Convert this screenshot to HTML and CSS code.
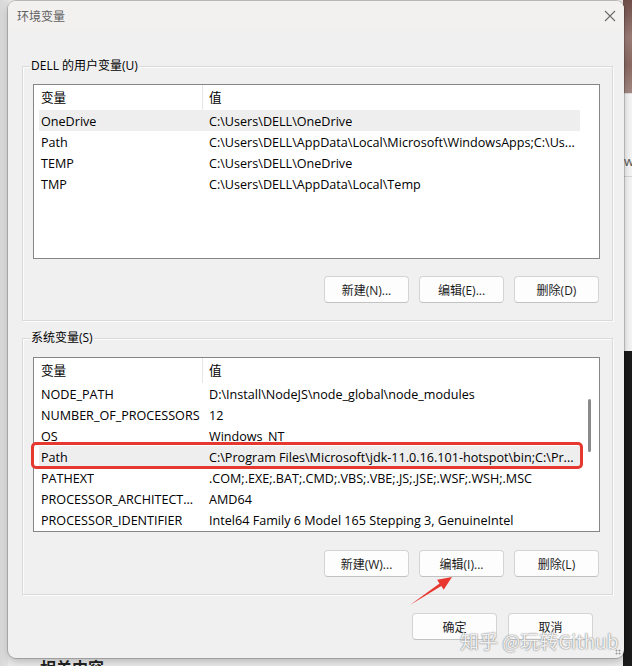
FILE: index.html
```html
<!DOCTYPE html>
<html lang="zh-CN">
<head>
<meta charset="utf-8">
<title>环境变量</title>
<link rel="stylesheet" href="styles.css">
</head>
<body>
<div class="desktop">
  <div class="strip">
    <div class="strip-photo"></div>
    <div class="strip-page"><span class="strip-w">w</span></div>
    <div class="strip-dark"></div>
  </div>
  <div class="page-text">相关内容</div>

  <div class="window">
    <div class="titlebar">
      <span class="title">环境变量</span>
      <svg class="close" width="12" height="12" viewBox="0 0 12 12"><path d="M1 1 L11 11 M11 1 L1 11" stroke="#6b6b6b" stroke-width="1.1" fill="none"/></svg>
    </div>

    <div class="body">
      <section class="group group-user">
        <div class="group-label">DELL 的用户变量(U)</div>
        <div class="list">
          <div class="list-main">
            <div class="row head"><div class="c1">变量</div><div class="c2">值</div></div>
            <div class="row sel"><div class="c1">OneDrive</div><div class="c2">C:\Users\DELL\OneDrive</div></div>
            <div class="row"><div class="c1">Path</div><div class="c2">C:\Users\DELL\AppData\Local\Microsoft\WindowsApps;C:\Us...</div></div>
            <div class="row"><div class="c1">TEMP</div><div class="c2">C:\Users\DELL\OneDrive</div></div>
            <div class="row"><div class="c1">TMP</div><div class="c2">C:\Users\DELL\AppData\Local\Temp</div></div>
          </div>
          <div class="scroll"></div>
        </div>
        <div class="btns">
          <button class="btn">新建(N)...</button>
          <button class="btn">编辑(E)...</button>
          <button class="btn">删除(D)</button>
        </div>
      </section>

      <section class="group group-sys">
        <div class="group-label">系统变量(S)</div>
        <div class="list">
          <div class="list-main">
            <div class="row head"><div class="c1">变量</div><div class="c2">值</div></div>
            <div class="row"><div class="c1">NODE_PATH</div><div class="c2">D:\Install\NodeJS\node_global\node_modules</div></div>
            <div class="row"><div class="c1">NUMBER_OF_PROCESSORS</div><div class="c2">12</div></div>
            <div class="row"><div class="c1">OS</div><div class="c2">Windows_NT</div></div>
            <div class="row sel marked"><div class="c1">Path</div><div class="c2">C:\Program Files\Microsoft\jdk-11.0.16.101-hotspot\bin;C:\Pr...</div></div>
            <div class="row"><div class="c1">PATHEXT</div><div class="c2">.COM;.EXE;.BAT;.CMD;.VBS;.VBE;.JS;.JSE;.WSF;.WSH;.MSC</div></div>
            <div class="row"><div class="c1">PROCESSOR_ARCHITECT...</div><div class="c2">AMD64</div></div>
            <div class="row"><div class="c1">PROCESSOR_IDENTIFIER</div><div class="c2">Intel64 Family 6 Model 165 Stepping 3, GenuineIntel</div></div>
          </div>
          <div class="scroll"><div class="thumb"></div></div>
        </div>
        <div class="btns">
          <button class="btn">新建(W)...</button>
          <button class="btn">编辑(I)...</button>
          <button class="btn">删除(L)</button>
        </div>
      </section>

      <div class="dialog-btns">
        <button class="btn">确定</button>
        <button class="btn">取消</button>
      </div>
    </div>

    <svg class="arrow" width="50" height="40" viewBox="0 0 50 40">
      <polygon points="4,34 35.3,15.1 37.7,18.8 46,6 31.1,8.8 33.5,12.5" fill="#e8372e"/>
    </svg>
    <div class="watermark">知乎 @玩转Github</div>
    <div class="grip"></div>
  </div>
</div>
</body>
</html>
```

FILE: styles.css
```css
html, body {
  margin: 0;
  padding: 0;
}

body {
  font-family: "Segoe UI", "Open Sans", "Noto Sans CJK SC", sans-serif;
  font-size: 12px;
  color: #000;
}

.desktop {
  position: relative;
  width: 632px;
  height: 666px;
  overflow: hidden;
  background: linear-gradient(to right, #d8d8d8 0, #e4e4e4 8px, #ececec 9px);
}

.strip {
  position: absolute;
  top: 0;
  right: 0;
  width: 9px;
  height: 666px;
  display: flex;
  flex-direction: column;
}

.strip-photo {
  height: 93px;
  background: linear-gradient(180deg, #6f4e49 0%, #9c7d77 40%, #8b6a63 70%, #a58a84 100%);
}

.strip-page {
  height: 257px;
  background: #f6f6f6;
  border-top: 1px solid #e0e0e0;
  position: relative;
  overflow: hidden;
}

.strip-w {
  display: block;
  margin-top: 58px;
  margin-left: 1px;
  font-size: 13px;
  color: #555;
  border-bottom: 1px solid #d8d8d8;
  padding-bottom: 6px;
}

.strip-dark {
  flex: 1;
  background: #1b1b1b;
}

.page-text {
  position: absolute;
  left: 40px;
  top: 655px;
  font-family: "Noto Sans CJK SC", sans-serif;
  font-size: 16px;
  font-weight: 700;
  color: #222;
}

.window {
  position: absolute;
  left: 8px;
  top: 1px;
  width: 616px;
  height: 657px;
  background: #f0f0f0;
  border-radius: 8px;
  box-shadow: 0 0 0 1px rgba(0, 0, 0, 0.18), 0 3px 10px rgba(0, 0, 0, 0.25);
  overflow: hidden;
}

.titlebar {
  height: 29px;
  background: #f3f1f0;
  display: flex;
  align-items: center;
  justify-content: space-between;
  padding: 0 9px 0 9px;
}

.title {
  font-family: "Noto Sans CJK SC", sans-serif;
  font-size: 12px;
  color: #606060;
  margin-top: -1px;
}

.close {
  margin-right: -1px;
  margin-top: 0;
}

.body {
  padding: 0 11px 0 14px;
}

.group {
  position: relative;
  border: 1px solid #dadada;
  box-shadow: inset 1px 1px 0 #fbfbfb, 1px 1px 0 #fbfbfb;
  padding: 17px 12px 17px 10px;
}

.group-user {
  margin-top: 36px;
}

.group-sys {
  margin-top: 17px;
  padding-top: 18px;
}

.group-label {
  position: absolute;
  top: -9px;
  left: 7px;
  padding: 0 1px;
  line-height: 16px;
  background: #f0f0f0;
  font-family: "Segoe UI", "Open Sans", "Noto Sans CJK SC", sans-serif;
  font-size: 12px;
  color: #000;
}

.list {
  height: 175px;
  box-sizing: border-box;
  border: 1px solid #868686;
  background: #fff;
  display: flex;
}

.list-main {
  flex: 1;
  padding-left: 5px;
  min-width: 0;
  font-size: 12.6px;
}

.row {
  position: relative;
  display: flex;
  height: 21px;
  line-height: 23px;
  white-space: nowrap;
}

.row.head {
  height: 25px;
  line-height: 26px;
}

.c1 {
  width: 162px;
  padding-left: 2px;
  flex: none;
  overflow: hidden;
}

.head .c1 {
  width: 161px;
  border-right: 1px solid #e6e6e6;
}

.c2 {
  padding-left: 6px;
  overflow: hidden;
  flex: 1;
}

.row.sel {
  background: #eeeeee;
}

.row.marked::after {
  content: "";
  position: absolute;
  top: -4px;
  bottom: -2px;
  left: -8px;
  right: -3px;
  border: 3px solid #e5382f;
  border-radius: 5px;
}

.scroll {
  width: 19px;
  flex: none;
}

.thumb {
  width: 3px;
  height: 53px;
  margin-top: 41px;
  margin-left: 8px;
  border-radius: 2px;
  background: #8a8a8a;
}

.btns {
  display: flex;
  justify-content: flex-end;
  gap: 10px;
  margin-top: 17px;
  padding-right: 1px;
}

.group-sys .btns {
  margin-top: 18px;
}

.btn {
  width: 85px;
  height: 27px;
  box-sizing: border-box;
  border: 1px solid #d4d4d4;
  border-bottom-color: #c2c2c2;
  border-radius: 4px;
  background: #fdfdfd;
  font-family: "Segoe UI", "Open Sans", "Noto Sans CJK SC", sans-serif;
  font-size: 12px;
  color: #1b1b1b;
  padding: 0;
}

.dialog-btns {
  display: flex;
  justify-content: flex-end;
  gap: 11px;
  margin-top: 18px;
  padding-right: 20px;
}

.dialog-btns .btn {
  width: 85px;
}

.arrow {
  position: absolute;
  left: 398px;
  top: 570px;
}

.watermark {
  position: absolute;
  left: 452px;
  top: 628px;
  font-family: "Noto Sans CJK SC", sans-serif;
  font-size: 19px;
  line-height: 24px;
  color: rgba(255, 255, 255, 0.9);
  text-shadow: 0 0 1px #7a7a7a, 0 0 2px #9a9a9a;
  white-space: nowrap;
}

.grip {
  position: absolute;
  right: 3px;
  bottom: 3px;
  width: 6px;
  height: 6px;
  background: radial-gradient(circle, #9a9a9a 0.8px, transparent 1.2px) 0 0 / 3px 3px;
}
```
